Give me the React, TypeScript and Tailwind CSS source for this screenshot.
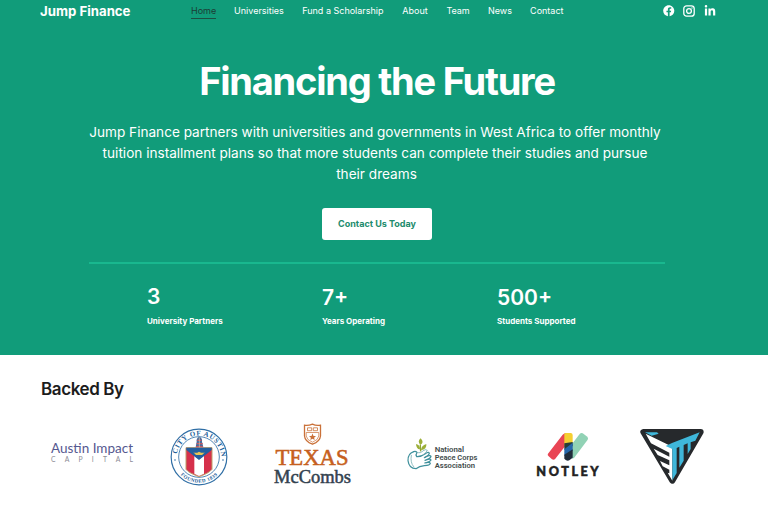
import { FaFacebook, FaLinkedinIn } from 'react-icons/fa';

const navItems = [
  { label: 'Home', width: 'w-[25px]', active: true },
  { label: 'Universities', width: 'w-[50px]' },
  { label: 'Fund a Scholarship', width: 'w-[82px]' },
  { label: 'About', width: 'w-[26px]' },
  { label: 'Team', width: 'w-[23.5px]' },
  { label: 'News', width: 'w-[24px]' },
  { label: 'Contact', width: 'w-[34px]' },
];

const stats = [
  { value: '3', label: 'University Partners', offset: 'pb-[1px]' },
  { value: '7+', label: 'Years Operating', offset: 'pt-[1px]' },
  { value: '500+', label: 'Students Supported', offset: 'pt-[1px]' },
];

function Header() {
  return (
    <header className="flex h-[22px] items-center pl-[39.5px] pr-[52.5px] text-white">
      <a className="w-[151.5px]">
        <svg width="92" height="20" viewBox="0 0 92 20">
          <text x="0" y="14.6" fontFamily="Inter, sans-serif" fontWeight="700" fontSize="13.2" textLength="90.5" lengthAdjust="spacingAndGlyphs" fill="#fff">Jump Finance</text>
        </svg>
      </a>
      <nav className="flex gap-[18.1px] text-[9px] leading-[13px]">
        {navItems.map(item => (
          <a
            key={item.label}
            className={`${item.width} h-[15px] whitespace-nowrap ${item.active ? 'border-b border-[#1d4f42] text-[#1c3d35]' : ''}`}
          >
            {item.label}
          </a>
        ))}
      </nav>
      <div className="ml-auto flex items-center gap-[8.5px]">
        <FaFacebook size={11.5} />
        <svg width="12" height="12" viewBox="0 0 12 12" fill="none" stroke="#fff" strokeWidth="1.3">
          <rect x="0.8" y="0.8" width="10.4" height="10.4" rx="2.8" />
          <circle cx="6" cy="6" r="2.4" />
          <circle cx="9" cy="3" r="0.7" fill="#fff" stroke="none" />
        </svg>
        <FaLinkedinIn size={12} />
      </div>
    </header>
  );
}

function AustinImpact() {
  return (
    <svg width="86" height="26" viewBox="0 0 86 26" className="overflow-visible">
      <text x="1" y="12.2" fontFamily="Lato, sans-serif" fontSize="12.6" textLength="82" lengthAdjust="spacingAndGlyphs" fill="#55588f">Austin Impact</text>
      <text x="1" y="21.4" fontFamily="Lato, sans-serif" fontSize="6.8" letterSpacing="9.2" fill="#8c8c96">CAPITAL</text>
    </svg>
  );
}

function CityOfAustin() {
  return (
    <svg width="58" height="58" viewBox="28 25 174 174">
      <defs>
        <path id="sealTop" d="M54 142 A67 67 0 1 1 176 142" />
        <path id="sealBottom" d="M44 142 A77 77 0 0 0 186 142" />
      </defs>
      <circle cx="115" cy="112" r="83.5" fill="#fff" stroke="#2f6ea5" strokeWidth="3.5" />
      <circle cx="115" cy="112" r="61" fill="#fff" stroke="#2f6ea5" strokeWidth="2.5" />
      <text fontFamily="'Liberation Serif', serif" fontWeight="700" fontSize="21" fill="#215d98">
        <textPath href="#sealTop" startOffset="40" textLength="196">CITY OF AUSTIN</textPath>
      </text>
      <text fontFamily="'Liberation Serif', serif" fontWeight="700" fontSize="15" fill="#215d98">
        <textPath href="#sealBottom" startOffset="28" textLength="124">FOUNDED 1839</textPath>
      </text>
      <circle cx="43" cy="121" r="2.5" fill="#2f6ea5" />
      <circle cx="187" cy="121" r="2.5" fill="#2f6ea5" />
      <path d="M76 84 H154 V149 Q146 160 115 171 Q84 160 76 149 Z" fill="#d5304b" stroke="#bca06b" strokeWidth="3" />
      <path d="M101 108 L115 119 L130 108 V162 L115 169 L101 162 Z" fill="#fff" />
      <path d="M77 84 H153 V91 L115 121 L77 91 Z" fill="#235f9f" />
      <path d="M98 98 Q106 102 115 96 Q126 102 133 98 L124 106 H106 Z" fill="#e5c456" />
      <path d="M105 83 L108 66 Q106 55 116 51 Q126 55 124 66 L128 83 Z" fill="#486b9c" />
      <path d="M110 62 H122 M108 72 H126 M106 81 H127" stroke="#c55761" strokeWidth="4" />
      <path d="M116 53 V83" stroke="#ead5b2" strokeWidth="2" />
    </svg>
  );
}

function TexasMcCombs() {
  return (
    <svg width="80" height="66" viewBox="0 0 80 66">
      <g fill="none" stroke="#ca7139" strokeWidth="1.3">
        <path d="M31.5 2.2 Q35 3 39.5 1.2 Q43 3 47.5 2.2 V13 Q47 18.5 39.5 21.2 Q32 18.5 31.5 13 Z" />
        <path d="M33.2 9.5 H45.8 V13 Q45.3 17 39.5 19.2 Q33.7 17 33.2 13 Z" strokeWidth="0.7" />
        <path d="M34.5 4.8 H38.7 V7.7 H34.5 Z M40.3 4.8 H44.5 V7.7 H40.3 Z" strokeWidth="0.8" />
      </g>
      <path d="M39.5 10.6 L40.5 12.9 L43 13.1 L41.1 14.7 L41.7 17.1 L39.5 15.8 L37.3 17.1 L37.9 14.7 L36 13.1 L38.5 12.9 Z" fill="#ca7139" />
      <text x="2.5" y="42" fontFamily="'Liberation Serif', serif" fontSize="23" textLength="73" lengthAdjust="spacingAndGlyphs" fill="#c65f20" stroke="#c65f20" strokeWidth="0.55">TEXAS</text>
      <text x="1" y="60" fontFamily="'Liberation Serif', serif" fontSize="18" textLength="77" lengthAdjust="spacingAndGlyphs" fill="#33424f" stroke="#33424f" strokeWidth="0.5">McCombs</text>
    </svg>
  );
}

function PeaceCorps() {
  return (
    <svg width="72" height="36" viewBox="34 34 216 108" className="overflow-visible">
      {/* sprout */}
      <path d="M75 77 Q74 64 74 57" fill="none" stroke="#8fa638" strokeWidth="4" />
      <path d="M74 58 Q64 47 75 38 Q87 50 74 58 Z M72 71 Q62 70 61 55 Q74 58 73 71 Z M76 74 Q77 59 92 55 Q94 71 76 74 Z" fill="#9caf38" />
      {/* hands */}
      <g fill="none" stroke="#3f909c" strokeWidth="3.6" strokeLinecap="round" strokeLinejoin="round">
        <path d="M54 78 Q36 84 37 105 Q40 129 61 129 Q71 121 86 120 Q103 119 104 113 Q102 109 91 111" />
        <path d="M54 78 Q61 76 64 81 Q59 87 63 93 Q75 94 89 84 Q99 77 101 83 Q99 89 86 96" />
        <path d="M88 95 Q103 86 106 92 Q105 98 88 104 M91 103 Q105 98 106 103 Q103 109 87 112" />
        <path d="M64 80 Q76 84 81 76 Q90 69 95 74 Q91 82 83 87 M47 89 Q43 111 54 123" stroke="#76aeb2" strokeWidth="2.4" />
      </g>
      <g fontFamily="Roboto, sans-serif" fontWeight="600" fontSize="24" fill="#424b4a">
        <text x="117" y="78" textLength="88" lengthAdjust="spacingAndGlyphs">National</text>
        <text x="117" y="102" textLength="128" lengthAdjust="spacingAndGlyphs">Peace Corps</text>
        <text x="117" y="126" textLength="121" lengthAdjust="spacingAndGlyphs">Association</text>
      </g>
    </svg>
  );
}

function Notley() {
  return (
    <svg width="66" height="48" viewBox="29 32 198 144">
      <path d="M126 35 Q117 34 112 40 L68 97 Q65 101 70 105 L80 114 Q86 117 90 112 L118 76 Z" fill="#e94554" />
      <path d="M163 38 Q167 33 172 36 L186 46 Q190 50 187 55 L146 110 L140 112 V68 Z" fill="#91d2b5" />
      <path d="M117 37 Q119 35 122 35 H137 Q142 36 142 41 V64 L117 74 Z" fill="#f4cf31" />
      <path d="M117 66 L142 62 V74 L117 86 Z" fill="#283c37" />
      <path d="M117 84 L142 64 V88 L117 104 Z" fill="#2566aa" />
      <path d="M117 100 L142 84 V109 L132 117 Q127 120 121 116 L117 112 Z" fill="#202c3b" />
      <text x="33" y="165" fontFamily="Lato, sans-serif" fontWeight="900" fontSize="38" textLength="187" fill="#222" stroke="#222" strokeWidth="1.5">NOTLEY</text>
    </svg>
  );
}

function TriangleMark() {
  return (
    <svg width="64" height="56" viewBox="29 24 192 168">
      <path d="M39 36 H211 L126 182 Z" fill="#26292c" stroke="#26292c" strokeWidth="18" strokeLinejoin="round" />
      <path d="M44 37 H80 L85 41 L64 47 Z" fill="#3fb7da" />
      <path d="M46 41 L126 80 V182 L112 158 L117 160 V149 L97 139 L89 123 L117 136 V121 L82 105 L70 86 L117 110 V98 L62 70 Z" fill="#fff" />
      <path d="M106 78 L125 69 L208 37 L195 62 L181 67 V87 L172 102 V70 L160 75 V122 L147 143 V80 L139 84 V159 L126 181 V87 Z" fill="#3fb7da" />
    </svg>
  );
}

export default function App() {
  return (
    <div className="h-[512px] w-[768px] overflow-hidden bg-white font-[Inter,sans-serif]">
      <section className="h-[355px] bg-[#119c7a]">
        <Header />
        <div className="ml-[89px] flex w-[576px] flex-col items-center text-white">
          <h1 className="mt-[34px] whitespace-nowrap text-[38px] font-bold leading-[50px] tracking-[-1.22px]">
            Financing the Future
          </h1>
          <div className="ml-[-4px] mt-[16px] whitespace-nowrap text-center text-[13.6px] leading-[21px]">
            <p>Jump Finance partners with universities and governments in West Africa to offer monthly</p>
            <p>tuition installment plans so that more students can complete their studies and pursue</p>
            <p className="pl-[3px]">their dreams</p>
          </div>
          <button className="mt-[22.5px] h-[32px] w-[110px] rounded-[3px] bg-white text-[9px] font-bold text-[#218b6c]">
            Contact Us Today
          </button>
        </div>
        <div className="ml-[89px] mt-[22.5px] h-[2px] w-[576px] bg-[#19b88f]" />
        <div className="ml-[147px] mt-[19px] grid w-[525px] grid-cols-3 text-white">
          {stats.map(s => (
            <div key={s.label}>
              <p className={`text-[21px] font-semibold leading-[28px] ${s.offset}`}>{s.value}</p>
              <p className="mt-[3px] whitespace-nowrap text-[8px] font-bold leading-[12px]">{s.label}</p>
            </div>
          ))}
        </div>
      </section>

      <section className="pt-[22px]">
        <h2 className="ml-[41px] text-[17px] font-semibold leading-[24px] tracking-[-0.4px] text-[#1c1c1c]">Backed By</h2>
        <div className="mt-[19px] flex h-[72px] items-center pl-[50px]">
          <div className="pb-[4px]"><AustinImpact /></div>
          <div className="ml-[33.5px] pt-[2px]"><CityOfAustin /></div>
          <div className="ml-[45.5px]"><TexasMcCombs /></div>
          <div className="ml-[53.5px] pb-[2px]"><PeaceCorps /></div>
          <div className="ml-[56px] pb-[1px]"><Notley /></div>
          <div className="ml-[39px]"><TriangleMark /></div>
        </div>
      </section>
    </div>
  );
}
